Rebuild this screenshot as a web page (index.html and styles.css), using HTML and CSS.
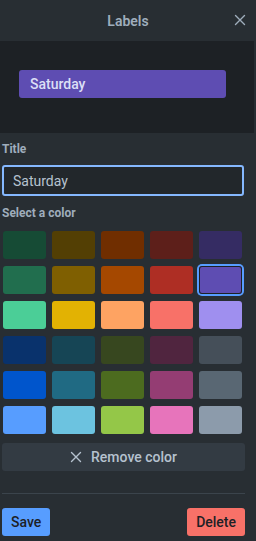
FILE: index.html
```html
<!DOCTYPE html>
<html lang="en">
<head>
  <meta charset="UTF-8">
  <title>Labels</title>
  <link rel="stylesheet" href="styles.css">
</head>
<body>

  <div class="popover">
    <div class="header">
      <span class="header-title">Labels</span>
      <button class="close-btn" aria-label="Close">
        <svg width="12" height="12" viewBox="0 0 12 12"><path d="M1.5 1.5l9 9M10.5 1.5l-9 9" stroke="currentColor" stroke-width="1.4" stroke-linecap="round"/></svg>
      </button>
    </div>

    <div class="preview">
      <div class="preview-label">Saturday</div>
    </div>

    <div class="content">
      <label class="field-label" for="title">Title</label>
      <input class="title-input" id="title" type="text" value="Saturday">

      <div class="field-label">Select a color</div>
      <div class="swatches">
        <span class="swatch" style="background:#164b35"></span>
        <span class="swatch" style="background:#533f04"></span>
        <span class="swatch" style="background:#702e00"></span>
        <span class="swatch" style="background:#5d1f1a"></span>
        <span class="swatch" style="background:#352c63"></span>

        <span class="swatch" style="background:#216e4e"></span>
        <span class="swatch" style="background:#7f5f01"></span>
        <span class="swatch" style="background:#a54800"></span>
        <span class="swatch" style="background:#ae2e24"></span>
        <span class="swatch selected" style="background:#5e4db2"></span>

        <span class="swatch" style="background:#4bce97"></span>
        <span class="swatch" style="background:#e2b203"></span>
        <span class="swatch" style="background:#fea362"></span>
        <span class="swatch" style="background:#f87168"></span>
        <span class="swatch" style="background:#9f8fef"></span>

        <span class="swatch" style="background:#09326c"></span>
        <span class="swatch" style="background:#164555"></span>
        <span class="swatch" style="background:#37471f"></span>
        <span class="swatch" style="background:#50253f"></span>
        <span class="swatch" style="background:#454f59"></span>

        <span class="swatch" style="background:#0055cc"></span>
        <span class="swatch" style="background:#206a83"></span>
        <span class="swatch" style="background:#4c6b1f"></span>
        <span class="swatch" style="background:#943d73"></span>
        <span class="swatch" style="background:#596773"></span>

        <span class="swatch" style="background:#579dff"></span>
        <span class="swatch" style="background:#6cc3e0"></span>
        <span class="swatch" style="background:#94c748"></span>
        <span class="swatch" style="background:#e774bb"></span>
        <span class="swatch" style="background:#8c9bab"></span>
      </div>

      <button class="remove-btn">
        <svg width="12" height="12" viewBox="0 0 12 12"><path d="M1.5 1.5l9 9M10.5 1.5l-9 9" stroke="currentColor" stroke-width="1.4" stroke-linecap="round"/></svg>
        Remove color
      </button>

      <hr class="divider">

      <div class="actions">
        <button class="btn btn-save">Save</button>
        <button class="btn btn-delete">Delete</button>
      </div>
    </div>
  </div>

</body>
</html>
```

FILE: styles.css
```css
html, body {
  margin: 0;
  padding: 0;
  background-color: #282e33;
}
body {
  font-family: Roboto, "Noto Sans", sans-serif;
  color: #b6c2cf;
  width: 256px;
  height: 541px;
  overflow: hidden;
}
button {
  font-family: inherit;
  cursor: pointer;
}
.header {
  height: 41px;
  display: flex;
  align-items: center;
  justify-content: center;
  position: relative;
}
.header-title {
  font-size: 14px;
  font-weight: 600;
  color: #9fadbc;
}
.close-btn {
  position: absolute;
  right: 8px;
  top: 12px;
  width: 16px;
  height: 16px;
  padding: 0;
  border: none;
  background: none;
  color: #9fadbc;
  display: flex;
  align-items: center;
  justify-content: center;
}
.preview {
  background-color: #1d2125;
  width: 245px;
  padding: 29px 0 35px;
  border-right: 9px solid #1d2125;
}
.preview-label {
  margin: 0 19px;
  height: 28px;
  line-height: 28px;
  padding: 0 11px;
  border-radius: 3px;
  background-color: #5e4db2;
  color: #dcdff6;
  font-size: 14px;
  font-weight: 500;
}
.content {
  width: 243px;
  padding: 0 0 0 2px;
}
.field-label {
  display: block;
  font-size: 12px;
  font-weight: 700;
  color: #9fadbc;
  line-height: 16px;
  margin: 8px 0;
}
.title-input {
  box-sizing: border-box;
  width: 242px;
  height: 31px;
  padding: 0 9px;
  border: 2px solid #85b8ff;
  border-radius: 3px;
  background-color: #22272b;
  color: #b6c2cf;
  font-family: inherit;
  font-size: 14px;
  outline: none;
  display: block;
}
.title-input + .field-label {
  margin: 9px 0 10px;
}
.swatches {
  display: grid;
  grid-template-columns: repeat(5, 43px);
  column-gap: 6px;
  row-gap: 7px;
  width: 240px;
  padding-left: 1px;
}
.swatch {
  display: block;
  height: 28px;
  border-radius: 3px;
}
.swatch.selected {
  box-shadow: inset 0 0 0 1px #1d2125, 0 0 0 2px #579dff;
}
.remove-btn {
  margin-top: 9px;
  width: 243px;
  height: 28px;
  border: none;
  border-radius: 3px;
  background-color: #333b43;
  color: #b6c2cf;
  font-size: 14px;
  font-weight: 500;
  display: flex;
  align-items: center;
  justify-content: center;
  gap: 9px;
}
.divider {
  border: none;
  border-top: 1px solid #3b444c;
  margin: 22px 0 14px;
}
.actions {
  display: flex;
  justify-content: space-between;
}
.btn {
  height: 28px;
  border: none;
  border-radius: 3px;
  color: #1d2125;
  font-size: 14px;
  font-weight: 500;
  padding: 0 9px;
}
.btn-save {
  background-color: #579dff;
}
.btn-delete {
  background-color: #f87168;
}
```
